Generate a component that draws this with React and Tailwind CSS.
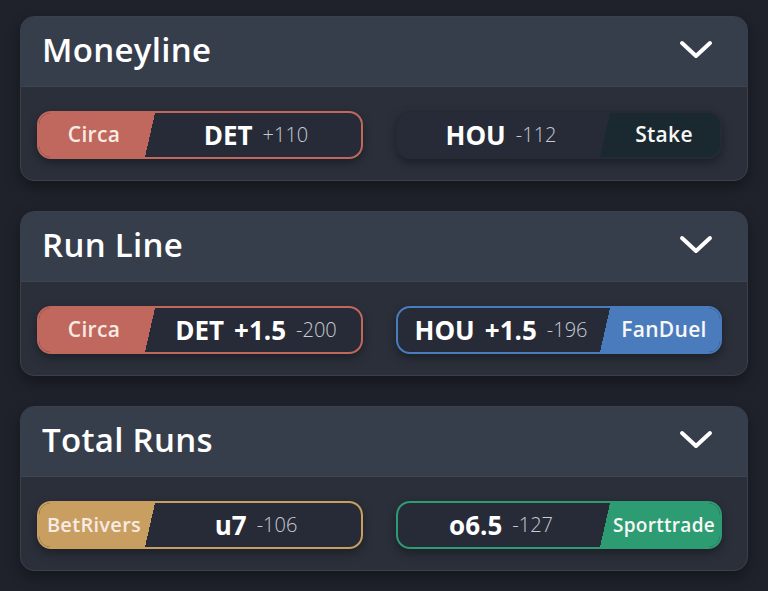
import React from "react";

const Chevron = () => (
  <svg width="34" height="20" viewBox="0 0 34 20" fill="none">
    <path d="M3 3 L17 16 L31 3" stroke="#ffffff" strokeWidth="4" strokeLinecap="round" strokeLinejoin="round" />
  </svg>
);

function LeftPill({ book, bookBg, slant, border, main, sub, odds, bookSize = "text-[21px]" }) {
  return (
    <div className={`flex h-[48px] w-[326px] overflow-hidden rounded-[14px] border-2 ${border} bg-[#272b37] shadow-[0_4px_10px_rgba(0,0,0,0.35)]`}>
      <div className={`flex w-[106px] shrink-0 items-center justify-center ${bookBg} pl-[4px] ${bookSize} font-semibold tracking-[0.3px] text-[#f7ebe4]`}>
        {book}
      </div>
      <div className={`w-[10px] shrink-0 ${slant}`} />
      <div className="flex flex-1 items-center justify-center gap-[10px] pr-[4px]">
        <span className="text-[26px] font-bold text-white">{main}</span>
        {sub && <span className="text-[26px] font-bold text-white">{sub}</span>}
        <span className="text-[20px] font-light text-[#c6cbd4]">{odds}</span>
      </div>
    </div>
  );
}

function RightPill({ book, bookBg, slant, border, main, sub, odds, bookSize = "text-[21px]" }) {
  return (
    <div className={`flex h-[48px] w-[326px] overflow-hidden rounded-[14px] border-2 ${border} bg-[#272b37] shadow-[0_4px_10px_rgba(0,0,0,0.35)]`}>
      <div className="flex flex-1 items-center justify-center gap-[10px] pl-[4px]">
        <span className="text-[26px] font-bold text-white">{main}</span>
        {sub && <span className="text-[26px] font-bold text-white">{sub}</span>}
        <span className="text-[20px] font-light text-[#c6cbd4]">{odds}</span>
      </div>
      <div className={`w-[10px] shrink-0 ${slant}`} />
      <div className={`flex w-[110px] shrink-0 items-center justify-center ${bookBg} pr-[2px] ${bookSize} font-semibold tracking-[0.3px] text-[#f7f7f7]`}>
        {book}
      </div>
    </div>
  );
}

function Card({ title, children }) {
  return (
    <div className="w-[728px] overflow-hidden rounded-[14px] border border-[#3a404c] bg-[#2a2f3a] shadow-[0_6px_14px_rgba(0,0,0,0.35)]">
      <div className="flex h-[70px] items-center justify-between border-b border-[#3f4553] bg-[#373e4b] pb-[4px] pl-[21px] pr-[34px]">
        <span className="text-[33px] font-semibold tracking-[0.3px] text-white">{title}</span>
        <Chevron />
      </div>
      <div className="flex h-[93px] items-start gap-[33px] pl-[16px] pt-[24px]">{children}</div>
    </div>
  );
}

export default function App() {
  return (
    <div className="flex min-h-[591px] w-[768px] flex-col gap-[30px] bg-[#1f222b] pl-[20px] pt-[16px]" style={{ fontFamily: "'Open Sans', 'Noto Sans', sans-serif" }}>
      <Card title="Moneyline">
        <LeftPill
          book="Circa"
          bookBg="bg-[#c0675e]"
          slant="bg-[linear-gradient(to_bottom_right,#c0675e_50%,transparent_50%)]"
          border="border-[#c0675e]"
          main="DET"
          odds="+110"
        />
        <RightPill
          book="Stake"
          bookBg="bg-[#1a2830]"
          slant="bg-[linear-gradient(to_top_left,#1a2830_50%,transparent_50%)]"
          border="border-[#262a35]"
          main="HOU"
          odds="-112"
        />
      </Card>
      <Card title="Run Line">
        <LeftPill
          book="Circa"
          bookBg="bg-[#c0675e]"
          slant="bg-[linear-gradient(to_bottom_right,#c0675e_50%,transparent_50%)]"
          border="border-[#c0675e]"
          main="DET"
          sub="+1.5"
          odds="-200"
        />
        <RightPill
          book="FanDuel"
          bookBg="bg-[#4a7bbd]"
          slant="bg-[linear-gradient(to_top_left,#4a7bbd_50%,transparent_50%)]"
          border="border-[#4a7bbd]"
          main="HOU"
          sub="+1.5"
          odds="-196"
        />
      </Card>
      <Card title="Total Runs">
        <LeftPill
          book="BetRivers"
          bookSize="text-[20px]"
          bookBg="bg-[#c89f60]"
          slant="bg-[linear-gradient(to_bottom_right,#c89f60_50%,transparent_50%)]"
          border="border-[#c89f60]"
          main="u7"
          odds="-106"
        />
        <RightPill
          book="Sporttrade"
          bookSize="text-[19px]"
          bookBg="bg-[#2e9c72]"
          slant="bg-[linear-gradient(to_top_left,#2e9c72_50%,transparent_50%)]"
          border="border-[#2e9c72]"
          main="o6.5"
          odds="-127"
        />
      </Card>
    </div>
  );
}
